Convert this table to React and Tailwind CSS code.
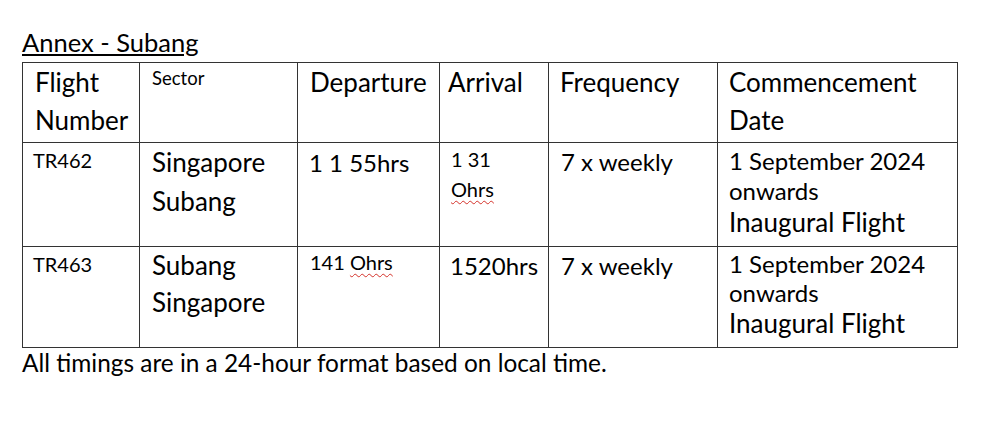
// Annex table for the Subang route, laid out like the Word original
function Cell({ className = "", children }) {
  return <div className={`border-r border-b border-[#333] ${className}`}>{children}</div>;
}

function Squiggle({ children }) {
  return (
    <span className="underline decoration-wavy decoration-[#d4312a] decoration-1 underline-offset-[3px]">
      {children}
    </span>
  );
}

function CommencementCell({ top, midLeading }) {
  return (
    <Cell className={`pl-[11px] ${top}`}>
      <div className="text-[24px] leading-[30px]">1 September 2024</div>
      <div className={`text-[24px] ${midLeading}`}>onwards</div>
      <div className="text-[26px] leading-[33px]">Inaugural Flight</div>
    </Cell>
  );
}

export default function App() {
  return (
    <div className="min-h-screen bg-white pt-[27px] font-['Lato',sans-serif] text-black">
      <div className="ml-[22px] w-fit text-[25.5px] leading-[30px] underline decoration-2 underline-offset-[2px]">
        Annex - Subang
      </div>

      <div className="ml-[22px] mt-[5px] grid w-fit grid-cols-[117px_158px_142px_109px_169px_240px] grid-rows-[80px_104px_101px] border-l border-t border-[#333]">
        {/* header */}
        <Cell className="pl-[12px] text-[26px] leading-[38px]">
          <div>Flight</div>
          <div>Number</div>
        </Cell>
        <Cell className="pl-[12px] pt-[1px] text-[18.5px] leading-[28px]">Sector</Cell>
        <Cell className="pl-[12px] text-[26px] leading-[38px]">Departure</Cell>
        <Cell className="pl-[8px] text-[26px] leading-[38px]">Arrival</Cell>
        <Cell className="pl-[11px] text-[26px] leading-[38px]">Frequency</Cell>
        <Cell className="pl-[11px] text-[26px] leading-[38px]">
          <div>Commencement</div>
          <div>Date</div>
        </Cell>

        {/* TR462 */}
        <Cell className="pl-[10px] pt-[2px] text-[20px] leading-[30px]">TR462</Cell>
        <Cell className="pl-[12px] text-[26px] leading-[39px]">
          <div>Singapore</div>
          <div>Subang</div>
        </Cell>
        <Cell className="pl-[11px] pt-[1px] text-[24px] leading-[38px]">1 1 55hrs</Cell>
        <Cell className="pl-[11px] pt-[1px] text-[20px] leading-[30px]">
          <div>1 31</div>
          <div>
            <Squiggle>Ohrs</Squiggle>
          </div>
        </Cell>
        <Cell className="pl-[12px] text-[24px] leading-[38px]">7 x weekly</Cell>
        <CommencementCell top="pt-[3px]" midLeading="leading-[30px]" />

        {/* TR463 */}
        <Cell className="pl-[10px] pt-[2px] text-[20px] leading-[30px]">TR463</Cell>
        <Cell className="pl-[12px] text-[26px] leading-[37px]">
          <div>Subang</div>
          <div>Singapore</div>
        </Cell>
        <Cell className="pl-[12px] text-[20px] leading-[30px]">
          141 <Squiggle>Ohrs</Squiggle>
        </Cell>
        <Cell className="pl-[10px] text-[24px] leading-[38px]">1520hrs</Cell>
        <Cell className="pl-[12px] text-[24px] leading-[38px]">7 x weekly</Cell>
        <CommencementCell top="pt-[2px]" midLeading="leading-[28px]" />
      </div>

      <p className="ml-[22px] text-[24.4px] leading-[30px]">
        All timings are in a 24-hour format based on local time.
      </p>
    </div>
  );
}
